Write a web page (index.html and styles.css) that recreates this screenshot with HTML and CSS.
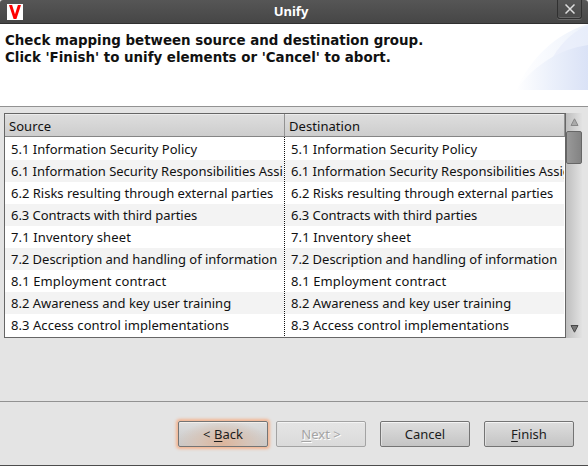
FILE: index.html
```html
<!DOCTYPE html>
<html lang="en">
<head>
<meta charset="utf-8">
<title>Unify</title>
<link rel="stylesheet" href="styles.css">
</head>
<body>
<div class="window">
  <header class="titlebar">
    <svg class="app-icon" width="16" height="16" viewBox="0 0 16 16"><rect width="16" height="16" fill="#fff"/><path d="M2 1h3.1L8 10.2 10.9 1H14L9.4 15H6.6z" fill="#f00"/></svg>
    <h1 class="title">Unify</h1>
    <button class="close" aria-label="Close"><svg width="10" height="10" viewBox="0 0 10 10"><path d="M.5.5l9 9M9.5.5l-9 9" stroke="#ddd" stroke-width="1.5"/></svg></button>
  </header>
  <section class="banner">
    <p class="message">Check mapping between source and destination group.<br>Click 'Finish' to unify elements or 'Cancel' to abort.</p>
    <svg class="swoosh" width="73" height="66" viewBox="0 0 73 66">
      <defs>
        <linearGradient id="fade"><stop offset="0" stop-color="#fff"/><stop offset=".4" stop-color="#f8fafe"/><stop offset="1" stop-color="#edf2fb"/></linearGradient>
        <linearGradient id="deep"><stop offset="0" stop-color="#fff"/><stop offset=".5" stop-color="#ebf0fb"/><stop offset="1" stop-color="#dae2f6"/></linearGradient>
      </defs>
      <path d="M1 66C15 35 40 10 73 0V66z" fill="url(#fade)"/>
      <path d="M34 40Q48 12 73 1V40z" fill="#e3eaf9" opacity=".55"/>
      <path d="M1 66C20 40 45 25 73 21V66z" fill="url(#deep)"/>
    </svg>
  </section>
  <main class="content">
    <div class="table">
      <div class="column">
        <div class="head">Source</div>
        <ul class="rows">
          <li>5.1 Information Security Policy</li>
          <li class="tight">6.1 Information Security Responsibilities Assi</li>
          <li>6.2 Risks resulting through external parties</li>
          <li class="tighter">6.3 Contracts with third parties</li>
          <li class="loose">7.1 Inventory sheet</li>
          <li class="tight">7.2 Description and handling of information</li>
          <li class="loose">8.1 Employment contract</li>
          <li>8.2 Awareness and key user training</li>
          <li class="wide">8.3 Access control implementations</li>
        </ul>
      </div>
      <div class="column">
        <div class="head">Destination</div>
        <ul class="rows">
          <li>5.1 Information Security Policy</li>
          <li class="tight">6.1 Information Security Responsibilities Assig</li>
          <li>6.2 Risks resulting through external parties</li>
          <li class="tighter">6.3 Contracts with third parties</li>
          <li class="loose">7.1 Inventory sheet</li>
          <li class="tight">7.2 Description and handling of information</li>
          <li class="loose">8.1 Employment contract</li>
          <li>8.2 Awareness and key user training</li>
          <li class="wide">8.3 Access control implementations</li>
        </ul>
      </div>
    </div>
    <div class="scrollbar">
      <svg class="arrow" width="9" height="8" viewBox="0 0 9 8"><path d="M4.5.8L8 7.5H1z" fill="#aaa" stroke="#888"/></svg>
      <div class="thumb"></div>
      <svg class="arrow arrow-down" width="9" height="8" viewBox="0 0 9 8"><path d="M1 .5h7L4.5 7.2z" fill="#777" stroke="#484848"/></svg>
    </div>
  </main>
  <footer class="actions">
    <button class="button focused"><span>&lt; <u>B</u>ack</span></button>
    <button class="button disabled" disabled><span><u>N</u>ext &gt;</span></button>
    <button class="button"><span>Cancel</span></button>
    <button class="button"><span><u>F</u>inish</span></button>
  </footer>
</div>
</body>
</html>
```
FILE: styles.css
```css
* { box-sizing: border-box; }
body {
  margin: 0;
  overflow: hidden;
  font: 13px "Noto Sans", "Open Sans", sans-serif;
  color: #111;
}
.window {
  width: 588px;
  height: 466px;
  display: flex;
  flex-direction: column;
  background: #e4e4e4;
  border-bottom: 1px solid #4c4c4c;
}
.titlebar {
  height: 24px;
  flex: none;
  display: grid;
  grid-template-columns: 31px 1fr 31px;
  background: linear-gradient(#565656, #464646);
  border-bottom: 1px solid #303030;
  border-radius: 3px 3px 0 0;
}
.app-icon { margin: 4px 0 0 7px; }
.title {
  margin: 0;
  padding-right: 6px;
  text-align: center;
  font: bold 13px/22px "Noto Sans", sans-serif;
  color: #fff;
}
.close {
  width: 25px;
  height: 19px;
  padding: 0;
  display: flex;
  align-items: center;
  justify-content: center;
  background: linear-gradient(#565656, #4a4a4a);
  border: 1px solid #303030;
  border-top: 0;
  border-radius: 0 0 3px 3px;
  box-shadow: 0 1px #686868, inset 0 -1px #666;
}
.banner {
  height: 83px;
  flex: none;
  display: flex;
  justify-content: space-between;
  background: #fff;
  border-bottom: 1px solid #929292;
}
.message {
  margin: 8px 0 0 5px;
  white-space: nowrap;
  font: bold 13.4px/17px "DejaVu Sans", sans-serif;
}
.swoosh { flex: none; }
.content {
  height: 295px;
  flex: none;
  display: flex;
  padding: 6px 6px 0 4px;
  border-bottom: 1px solid #929292;
}
.table {
  width: 562px;
  height: 225px;
  display: grid;
  grid-template-columns: 280px 280px;
  border: 1px solid #666;
  background: #fff;
}
.column { overflow: hidden; }
.head {
  height: 23px;
  padding-left: 4px;
  line-height: 24px;
  letter-spacing: .06px;
  background: linear-gradient(#dedede, #cdcdcd);
  border-right: 1px solid #929292;
  border-bottom: 1px solid #858585;
  box-shadow: inset 0 1px #ececec;
}
.rows {
  margin: 0;
  padding: 1px 0 0;
  list-style: none;
  height: 200px;
  background: #fff;
}
.column:first-child .rows {
  background: repeating-linear-gradient(#111 0 1px, transparent 1px 2px) right / 1px 100% no-repeat #fff;
}
.rows li {
  height: 22px;
  margin-right: 1px;
  padding-left: 6px;
  line-height: 22px;
  white-space: nowrap;
  overflow: hidden;
}
.rows li:nth-child(even) { background: #f3f3f3; }
.rows .tight { letter-spacing: -.03px; }
.rows .tighter { letter-spacing: -.06px; }
.rows .loose { letter-spacing: .12px; }
.rows .wide { letter-spacing: .06px; }
.scrollbar {
  width: 16px;
  height: 225px;
  display: flex;
  flex-direction: column;
  align-items: center;
  background: linear-gradient(90deg, #bebebe, #e2e2e2);
}
.arrow { margin-top: 5px; flex: none; }
.arrow-down { margin: auto 0 5px; }
.thumb {
  width: 16px;
  height: 33px;
  margin-top: 5px;
  background: linear-gradient(90deg, #999, #838383);
  border: 1px solid #666;
  border-radius: 2px;
}
.actions {
  padding: 19px 14px 0 0;
  display: flex;
  justify-content: flex-end;
  gap: 14px;
}
.button {
  width: 90px;
  height: 26px;
  padding: 0;
  font: inherit;
  line-height: 22px;
  color: #1c1c1c;
  background: linear-gradient(#dedede, #c4c4c4);
  border: 1px solid #747474;
  border-radius: 2px;
  box-shadow: inset 0 1px #f4f4f4, inset 1px 0 #e0e0e0;
}
.button u { text-underline-offset: 2px; text-decoration-thickness: 1px; }
.focused {
  margin-right: -6px;
  background: radial-gradient(ellipse at 50% 90%, #dcb59c, #d6c4b8 40%, transparent 75%), linear-gradient(#dedede, #c8c8c8);
  box-shadow: 0 0 3px 2px #f3b592, inset 0 1px #f4eee9;
}
.disabled {
  color: #a4a4a4;
  background: linear-gradient(#e5e5e5, #dadada);
  border-color: #a3a3a3;
  text-shadow: 1px 1px #fff;
}
```
